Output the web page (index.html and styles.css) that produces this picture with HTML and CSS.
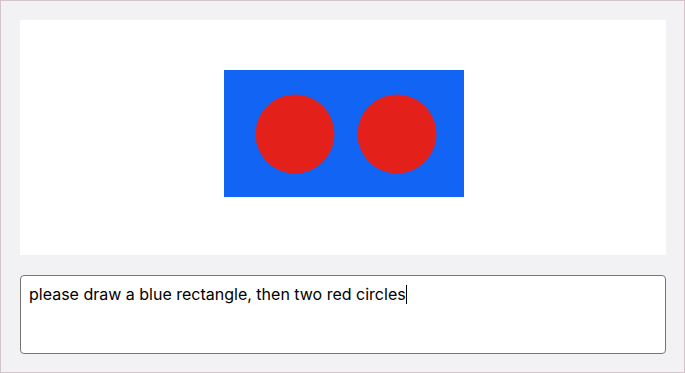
FILE: index.html
```html
<!DOCTYPE html>
<html lang="en">
<head>
    <meta charset="UTF-8">
    <meta name="viewport" content="width=device-width, initial-scale=1.0">
    <title>Sketch Prompt</title>
    <link rel="stylesheet" href="styles.css">
</head>
<body>

<div class="window">
    <!-- drawing area -->
    <div class="canvas">
        <svg width="646" height="235" viewBox="0 0 646 235">
            <rect x="204" y="50" width="240" height="127" fill="#1264f5"/>
            <circle cx="275" cy="114" r="39.5" fill="#e3211a"/>
            <circle cx="377" cy="114" r="39.5" fill="#e3211a"/>
        </svg>
    </div>

    <!-- prompt box -->
    <div class="prompt">please draw a blue rectangle, then two red circles<span class="caret"></span></div>
</div>

</body>
</html>
```

FILE: styles.css
```css
html, body {
    margin: 0;
    padding: 0;
}

body {
    font-family: Inter, "Liberation Sans", Arial, sans-serif;
    background-color: #f2f2f4;
}

.window {
    box-sizing: border-box;
    width: 685px;
    height: 373px;
    border: 1px solid #d3c3cb;
    background-color: #f2f2f4;
    padding: 19px 18px 18px 19px;
    display: flex;
    flex-direction: column;
    gap: 20px;
}

.canvas {
    width: 646px;
    height: 235px;
    background-color: #ffffff;
}

.canvas svg {
    display: block;
}

.prompt {
    box-sizing: border-box;
    width: 646px;
    height: 79px;
    background-color: #ffffff;
    border: 1px solid #767676;
    border-radius: 4px;
    padding: 8px 8px;
    font-size: 16px;
    line-height: 20px;
    color: #000000;
}

.caret {
    display: inline-block;
    width: 1px;
    height: 19px;
    background-color: #000000;
    vertical-align: -4px;
}
```
